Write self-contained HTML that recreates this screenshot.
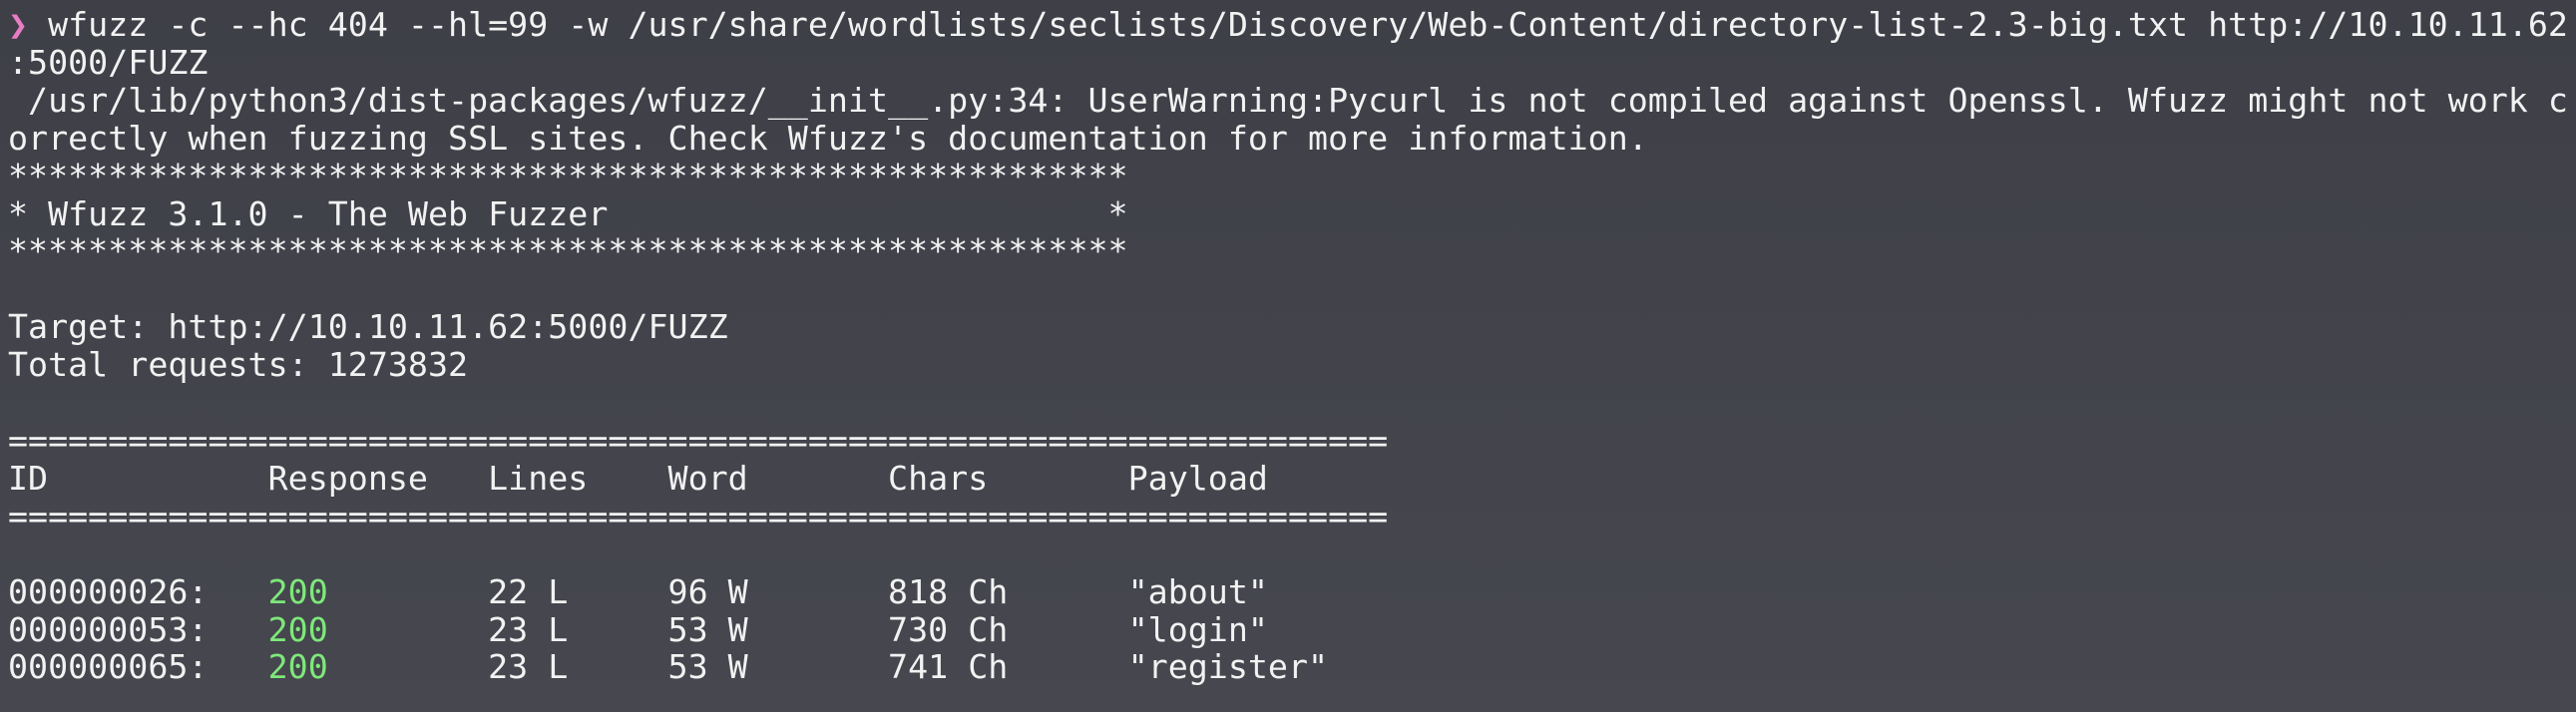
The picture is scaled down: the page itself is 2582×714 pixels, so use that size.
<!DOCTYPE html>
<html><head><meta charset="utf-8"><style>
html,body{margin:0;padding:0;}
body{width:2582px;height:714px;overflow:hidden;background:linear-gradient(#3e3f47,#46474f);}
pre{margin:0;position:absolute;left:8px;top:6px;font-family:"DejaVu Sans Mono","Liberation Mono",monospace;font-size:33.3px;line-height:37.9px;color:#f2f2f2;white-space:pre;}
.p{color:#e87cc5;display:inline-block;width:20.06px;}
.g{color:#7ee87a;}
</style></head><body>
<pre><span class="p">❯</span> wfuzz -c --hc 404 --hl=99 -w /usr/share/wordlists/seclists/Discovery/Web-Content/directory-list-2.3-big.txt http://10.10.11.62
:5000/FUZZ
 /usr/lib/python3/dist-packages/wfuzz/__init__.py:34: UserWarning:Pycurl is not compiled against Openssl. Wfuzz might not work c
orrectly when fuzzing SSL sites. Check Wfuzz's documentation for more information.
********************************************************
* Wfuzz 3.1.0 - The Web Fuzzer                         *
********************************************************

Target: http://10.10.11.62:5000/FUZZ
Total requests: 1273832

=====================================================================
ID           Response   Lines    Word       Chars       Payload
=====================================================================

000000026:   <span class="g">200</span>        22 L     96 W       818 Ch      "about"
000000053:   <span class="g">200</span>        23 L     53 W       730 Ch      "login"
000000065:   <span class="g">200</span>        23 L     53 W       741 Ch      "register"
</pre>
</body></html>
